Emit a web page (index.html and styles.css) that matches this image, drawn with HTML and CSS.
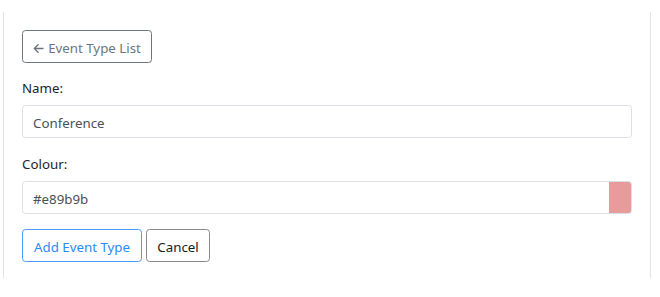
FILE: index.html
```html
<!DOCTYPE html>
<html>
<head>
<meta charset="utf-8">
<link rel="stylesheet" href="styles.css">
</head>
<body>
<div class="panel">
  <div class="back-row">
    <button class="btn btn-back"><svg class="arrow" width="11" height="11" viewBox="0 0 11 11"><path d="M10.5 5.5H1.3M5.5 1.3L1.3 5.5l4.2 4.2" fill="none" stroke="currentColor" stroke-width="1.3"/></svg>Event Type List</button>
  </div>
  <div class="group">
    <label class="label">Name:</label>
    <div class="control">Conference</div>
  </div>
  <div class="group">
    <label class="label">Colour:</label>
    <div class="control colour"><span class="value">#e89b9b</span><span class="swatch"></span></div>
  </div>
  <div class="actions">
    <button class="btn btn-primary">Add Event Type</button>
    <button class="btn btn-cancel">Cancel</button>
  </div>
</div>
</body>
</html>
```
FILE: styles.css
```css
html, body {
  margin: 0;
  padding: 0;
  background: #fff;
}
body {
  padding: 12px 8px 0 3px;
  font-family: "Noto Sans", "Open Sans", sans-serif;
  font-size: 13.3px;
  line-height: 21px;
  color: #212529;
}
.panel {
  width: 610px;
  border-left: 1px solid #e3e3e3;
  border-right: 1px solid #e3e3e3;
  padding: 18px 18px 16px 18px;
}
.back-row {
  margin-bottom: 14px;
}
.btn {
  font-family: inherit;
  font-size: 13.3px;
  line-height: 21px;
  height: 33px;
  padding: 7px 0 3px;
  border-radius: 3.5px;
  background: #fff;
  box-sizing: border-box;
  display: inline-flex;
  align-items: center;
  justify-content: center;
  white-space: nowrap;
  cursor: pointer;
}
.btn-back {
  border: 1px solid #6c757d;
  color: #6c757d;
  width: 130px;
}
.arrow {
  margin-right: 4px;
}
.group {
  margin-bottom: 15px;
}
.label {
  display: block;
  margin-bottom: 7px;
  padding-top: 1px;
  height: 20px;
}
.control {
  height: 33px;
  box-sizing: border-box;
  border: 1px solid #dcdfe3;
  border-radius: 3.5px;
  padding: 7px 10px 3px;
  color: #495057;
}
.colour {
  display: flex;
  padding-right: 0;
  overflow: hidden;
}
.value {
  flex: 1;
}
.swatch {
  width: 22px;
  margin: -7px 0 -3px;
  background: #e89b9b;
}
.actions {
  display: flex;
  gap: 4px;
}
.btn-primary {
  border: 1px solid #4a9dff;
  color: #2b88fb;
  width: 120px;
}
.btn-cancel {
  border: 1px solid #8a8a8a;
  color: #1a1a1a;
  width: 64px;
}
```
